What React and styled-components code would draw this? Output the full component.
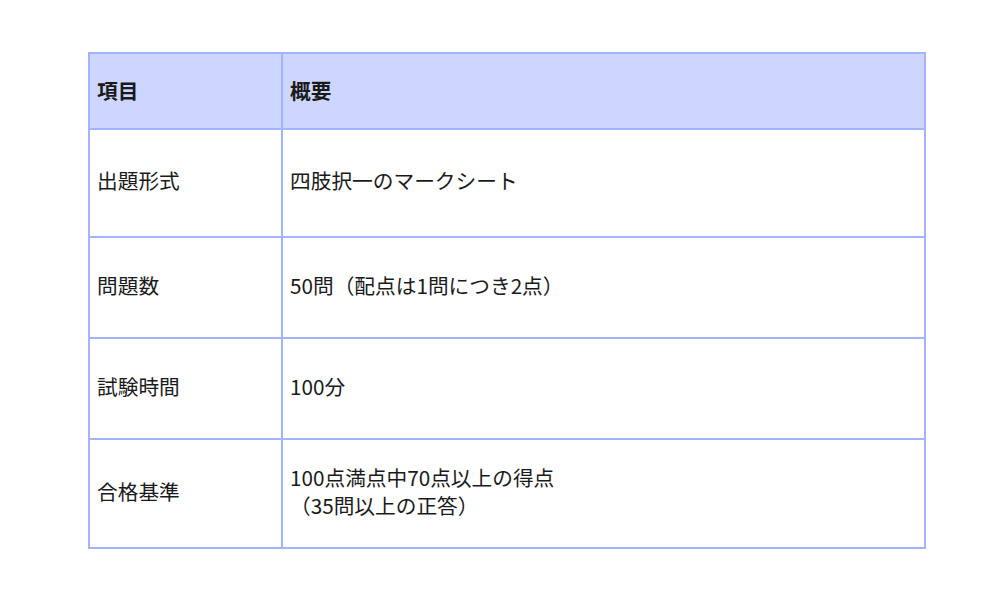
import React from 'react';
import styled, { createGlobalStyle } from 'styled-components';

const Global = createGlobalStyle`
  body {
    margin: 0;
    background: #ffffff;
    font-family: "Noto Sans CJK JP", "Noto Sans", sans-serif;
    color: #1a1a1a;
  }
`;

const Page = styled.div`
  padding: 52px 0 0 88px;
`;

const Table = styled.table`
  width: 838px;
  border-collapse: collapse;
  font-size: 20.7px;
  line-height: 28px;
`;

const HeadCell = styled.th`
  background: #ccd6ff;
  border: 2px solid #a3b3ff;
  text-align: left;
  font-weight: 700;
  padding: 0 7px 2px;
  height: 72px;
  width: ${(p) => p.$w || 'auto'};
`;

const Cell = styled.td`
  border: 2px solid #a3b3ff;
  padding: 0 7px 6px;
  height: ${(p) => p.$h}px;
  vertical-align: middle;
`;

const rows = [
  { label: '出題形式', value: ['四肢択一のマークシート'], h: 100 },
  { label: '問題数', value: ['50問（配点は1問につき2点）'], h: 93 },
  { label: '試験時間', value: ['100分'], h: 93 },
  { label: '合格基準', value: ['100点満点中70点以上の得点', '（35問以上の正答）'], h: 101 },
];

export default function App() {
  return (
    <Page>
      <Global />
      <Table>
        <thead>
          <tr>
            <HeadCell $w="177px">項目</HeadCell>
            <HeadCell>概要</HeadCell>
          </tr>
        </thead>
        <tbody>
          {rows.map((r) => (
            <tr key={r.label}>
              <Cell $h={r.h}>{r.label}</Cell>
              <Cell $h={r.h}>
                {r.value.map((v, i) => (
                  <div key={i}>{v}</div>
                ))}
              </Cell>
            </tr>
          ))}
        </tbody>
      </Table>
    </Page>
  );
}
